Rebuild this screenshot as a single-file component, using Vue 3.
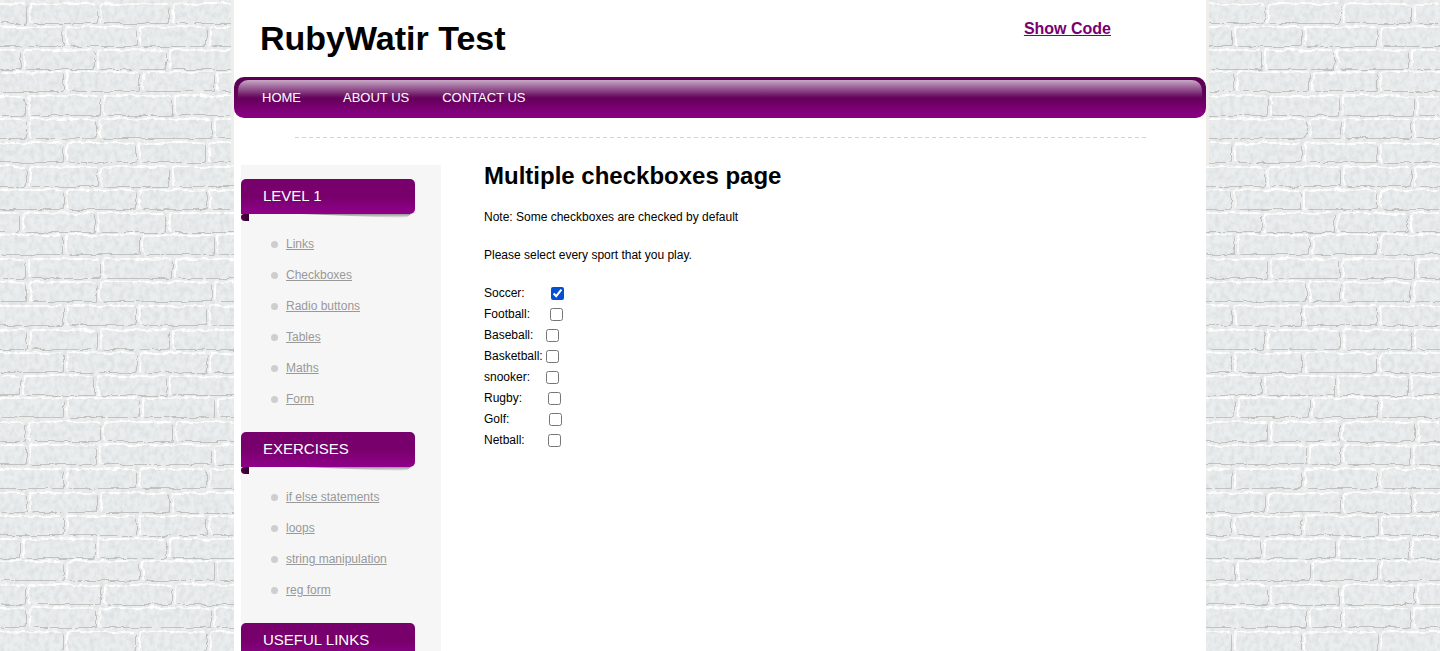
<script setup>
import { ref } from 'vue'

const navItems = ['HOME', 'ABOUT US', 'CONTACT US']

const sections = [
  { title: 'LEVEL 1', links: ['Links', 'Checkboxes', 'Radio buttons', 'Tables', 'Maths', 'Form'] },
  { title: 'EXERCISES', links: ['if else statements', 'loops', 'string manipulation', 'reg form'] },
  { title: 'USEFUL LINKS', links: [] },
]

// pad = number of non-breaking spaces between the label and its box
const sports = ref([
  { label: 'Soccer:', pad: 7, checked: true },
  { label: 'Football:', pad: 5, checked: false },
  { label: 'Baseball:', pad: 3, checked: false },
  { label: 'Basketball:', pad: 0, checked: false },
  { label: 'snooker:', pad: 4, checked: false },
  { label: 'Rugby:', pad: 7, checked: false },
  { label: 'Golf:', pad: 11, checked: false },
  { label: 'Netball:', pad: 6, checked: false },
])

// Brick wall tile, 219 x 163: each course has a top edge and its joints
const courses = [
  { y: 5, joints: [28, 99, 171] },
  { y: 28, joints: [65, 138, 208] },
  { y: 51, joints: [22, 96, 168] },
  { y: 73, joints: [65, 141, 216] },
  { y: 97, joints: [27, 102, 174] },
  { y: 120, joints: [28, 98, 213] },
  { y: 144, joints: [65, 138, 208] },
]
const bricks = courses.flatMap(({ y, joints }) =>
  [joints[joints.length - 1] - 219, ...joints].map((x, i, all) => ({
    x: x + 3,
    y,
    w: (all[i + 1] ?? joints[0] + 219) - x - 5,
  }))
)
</script>

<template>
  <div class="page">
    <svg class="wall" aria-hidden="true">
      <defs>
        <filter id="rough" x="0" y="0" width="100%" height="100%" color-interpolation-filters="sRGB">
          <feTurbulence type="fractalNoise" baseFrequency="0.07 0.1" numOctaves="3" seed="4" result="n" />
          <feDisplacementMap in="SourceGraphic" in2="n" scale="5" xChannelSelector="R" yChannelSelector="G" />
          <feGaussianBlur stdDeviation="0.5" />
        </filter>
        <filter id="grain" x="0" y="0" width="100%" height="100%" color-interpolation-filters="sRGB">
          <feTurbulence type="fractalNoise" baseFrequency="0.2 0.16" numOctaves="3" seed="9" />
          <feColorMatrix values="0 0 0 0 0.68  0 0 0 0 0.7  0 0 0 0 0.7  0.5 0 0 0 -0.18" />
        </filter>
        <pattern id="bricks" width="219" height="163" patternUnits="userSpaceOnUse">
          <rect width="219" height="163" fill="#edefee" />
          <g v-for="(b, i) in bricks" :key="i">
            <rect :x="b.x - 2" :y="b.y - 2" :width="b.w + 1" height="20" rx="2" fill="#ffffff" />
            <rect :x="b.x + 1" :y="b.y + 1" :width="b.w" height="18" rx="2" fill="#c2c4c2" />
            <rect :x="b.x" :y="b.y" :width="b.w" height="18" rx="2" fill="#eaeeee" />
          </g>
        </pattern>
      </defs>
      <rect width="100%" height="100%" fill="#ebeeee" />
      <rect width="100%" height="100%" fill="url(#bricks)" filter="url(#rough)" />
      <rect width="100%" height="100%" filter="url(#grain)" />
    </svg>

    <div class="sheet">
      <header class="header">
        <h1>RubyWatir Test</h1>
        <a class="show-code" href="#code">Show Code</a>
      </header>

      <nav class="nav">
        <a v-for="item in navItems" :key="item" href="#">{{ item }}</a>
      </nav>

      <div class="divider"></div>

      <div class="columns">
        <aside class="sidebar">
          <section v-for="s in sections" :key="s.title">
            <h3>{{ s.title }}</h3>
            <ul>
              <li v-for="l in s.links" :key="l"><a href="#">{{ l }}</a></li>
            </ul>
          </section>
        </aside>

        <main class="content">
          <h2>Multiple checkboxes page</h2>
          <p>Note: Some checkboxes are checked by default</p>
          <p>Please select every sport that you play.</p>
          <form>
            <label v-for="s in sports" :key="s.label" class="sport">
              <span>{{ s.label + '\u00a0'.repeat(s.pad) }}</span>
              <input v-model="s.checked" type="checkbox" />
            </label>
          </form>
        </main>
      </div>
    </div>
  </div>
</template>

<style>
body {
  margin: 0;
}
</style>

<style scoped>
.page {
  position: relative;
  height: 100vh;
  overflow: hidden;
  font-family: "Liberation Sans", Arial, sans-serif;
  font-size: 12px;
  color: #000;
}
.wall {
  position: absolute;
  inset: 0;
  width: 100%;
  height: 100%;
}
.sheet {
  position: relative;
  max-width: 972px;
  min-height: 100%;
  margin: 0 auto;
  background: #fff;
}
.sheet::before {
  content: "";
  position: absolute;
  top: 0;
  left: -3px;
  right: -3px;
  height: 165px;
  border: solid #efeeeb;
  border-width: 0 3px;
  box-sizing: border-box;
}
.header {
  position: relative;
  display: flex;
  justify-content: space-between;
  align-items: flex-start;
  height: 77px;
  padding: 0 95px 0 26px;
  box-sizing: border-box;
}
h1 {
  margin: 18px 0 0;
  font-size: 34px;
  line-height: 40px;
}
.show-code {
  margin-top: 19px;
  font-size: 16px;
  line-height: 20px;
  font-weight: bold;
  color: #7a006f;
}
.nav {
  position: relative;
  display: flex;
  gap: 33px;
  height: 41px;
  padding: 0 28px;
  border-radius: 10px;
  background: linear-gradient(#5c0054 0, #620059 18px, #6a0061 24px, #870080 37px, #870080);
}
.nav::before {
  content: "";
  position: absolute;
  top: 3px;
  left: 4px;
  right: 4px;
  height: 18px;
  border-radius: 10px 10px 0 0;
  background: linear-gradient(rgba(255, 255, 255, 0.66), rgba(255, 255, 255, 0));
}
.nav a {
  position: relative;
  min-width: 48px;
  font-size: 13px;
  line-height: 41px;
  color: #fff;
  text-decoration: none;
}
.divider {
  height: 1px;
  margin: 19px 59px 27px 61px;
  background: repeating-linear-gradient(90deg, #d3d3d3 0 4px, transparent 4px 7px);
}
.columns {
  display: flex;
  gap: 43px;
  padding: 0 7px;
}
.sidebar {
  flex: 0 0 200px;
  min-height: 486px;
  padding-top: 14px;
  box-sizing: border-box;
  background: #f6f6f6;
}
h3 {
  position: relative;
  width: 174px;
  height: 35px;
  margin: 0;
  padding-left: 22px;
  box-sizing: border-box;
  border-radius: 5px 5px 5px 0;
  background: linear-gradient(#78006d 0, #78006d 50%, #90008a);
  font-size: 15px;
  line-height: 34px;
  font-weight: normal;
  color: #fff;
}
h3::before {
  content: "";
  position: absolute;
  top: 35px;
  left: 0;
  width: 8px;
  height: 7px;
  border-radius: 3px 0 0 4px;
  background: linear-gradient(90deg, #4d0049, #36002f);
}
h3::after {
  content: "";
  position: absolute;
  top: 35px;
  left: 60px;
  right: 4px;
  height: 4px;
  background: linear-gradient(rgba(0, 0, 0, 0.4), rgba(0, 0, 0, 0));
  clip-path: polygon(0 0, 100% 0, 97% 70%, 90% 100%);
}
ul {
  margin: 0;
  padding: 15px 0 17px 30px;
  list-style: none;
}
li {
  display: flex;
  align-items: center;
  gap: 8px;
  height: 31px;
}
li::before {
  content: "";
  width: 7px;
  height: 7px;
  border-radius: 50%;
  background: #cecece;
}
li a {
  line-height: 15px;
  color: #999;
}
.content {
  flex: 1;
}
h2 {
  margin: -3px 0 18px;
  font-size: 24px;
  line-height: 28px;
}
p {
  margin: 0 0 19px;
  line-height: 19px;
}
p:last-of-type {
  margin-bottom: 17px;
}
.sport {
  display: flex;
  align-items: center;
  width: fit-content;
  height: 21px;
}
.sport input {
  width: 13px;
  height: 13px;
  margin: 1px 3px 0;
  accent-color: #0550d0;
}
</style>
